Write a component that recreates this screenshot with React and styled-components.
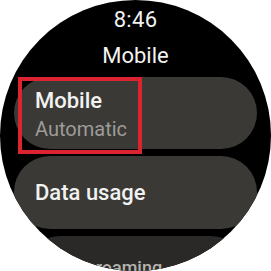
import React from 'react';
import styled, { createGlobalStyle } from 'styled-components';

const GlobalStyle = createGlobalStyle`
  html, body {
    margin: 0;
    padding: 0;
    background: #ffffff;
  }
  body {
    font-family: Roboto, "Noto Sans", sans-serif;
  }
`;

const Screen = styled.div`
  width: 271px;
  height: 271px;
  border-radius: 50%;
  background: #000;
  overflow: hidden;
  display: flex;
  flex-direction: column;
  align-items: stretch;
  color: #f2f2f0;
`;

const Time = styled.div`
  padding-top: 7px;
  font-size: 22px;
  line-height: 26px;
  text-align: center;
  letter-spacing: 0.3px;
`;

const Title = styled.div`
  margin-top: 10px;
  font-size: 22px;
  line-height: 26px;
  text-align: center;
`;

const ChipList = styled.div`
  margin-top: 8px;
  display: flex;
  flex-direction: column;
  gap: 7px;
`;

const Chip = styled.div`
  position: relative;
  margin: 0 ${p => p.$inset || 14}px;
  height: ${p => p.$height || 72}px;
  border-radius: 36px;
  background: ${p => (p.$faded ? '#2a2927' : '#3a3936')};
  padding-left: ${p => p.$pad || 21}px;
  box-sizing: border-box;
  display: flex;
  flex-direction: column;
  justify-content: ${p => (p.$padTop ? 'flex-start' : 'center')};
  padding-top: ${p => p.$padTop || 0}px;
  flex-shrink: 0;
`;

const Label = styled.div`
  font-size: ${p => p.$size || 22}px;
  line-height: 26px;
  font-weight: 500;
  color: ${p => (p.$faded ? '#b4b3af' : '#f2f2f0')};
`;

const Secondary = styled.div`
  margin-top: 3px;
  font-size: 20px;
  line-height: 24px;
  color: #9d9c98;
`;

const Highlight = styled.div`
  position: absolute;
  left: 4px;
  top: 0;
  width: 124px;
  height: 77px;
  box-sizing: border-box;
  border: 4px solid #dc2430;
  pointer-events: none;
`;

export default function App() {
  return (
    <>
      <GlobalStyle />
      <Screen>
        <Time>8:46</Time>
        <Title>Mobile</Title>
        <ChipList>
          <Chip $padTop={11}>
            <Label>Mobile</Label>
            <Secondary>Automatic</Secondary>
            <Highlight />
          </Chip>
          <Chip $height={73}>
            <Label>Data usage</Label>
          </Chip>
          <Chip $faded $inset={24} $pad={30} $height={72} $padTop={19}>
            <Label $faded $size={18}>Data roaming</Label>
          </Chip>
        </ChipList>
      </Screen>
    </>
  );
}
